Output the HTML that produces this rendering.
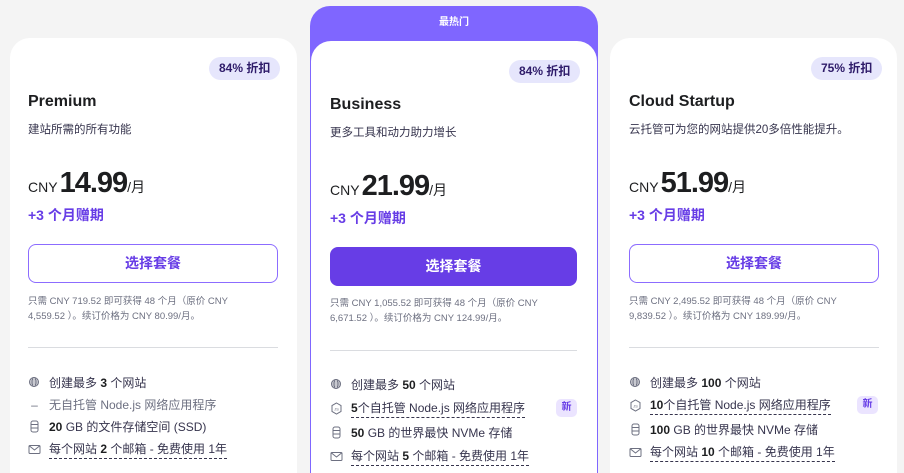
<!DOCTYPE html>
<html><head><meta charset="utf-8"><style>
*{margin:0;padding:0;box-sizing:border-box}
html,body{width:904px;height:473px;overflow:hidden}
body{background:#f4f4f4;font-family:"Liberation Sans","Noto Sans CJK SC",sans-serif;color:#1d1e20}
#w{position:relative;width:904px;height:473px;overflow:hidden}
.card{position:absolute;background:#fff;border-radius:20px 20px 0 0}
.a{position:absolute;white-space:nowrap}
.badge{background:#e6e6fc;border-radius:12px;font-size:12px;font-weight:bold;color:#2f1c6a;height:23px;line-height:23px;padding:0 10px}
.title{font-size:16px;font-weight:bold;color:#1d1e20}
.sub{font-size:11.5px;color:#36344d}
.cny{font-size:14px;color:#1d1e20;margin-right:2px}
.big{font-size:29px;font-weight:bold;letter-spacing:-1px}
.per{font-size:14px}
.bonus{font-size:14px;font-weight:bold;color:#673de6}
.btn{border:1px solid #8c6cff;border-radius:8px;height:39px;line-height:37px;text-align:center;font-size:14px;font-weight:bold;color:#673de6}
.btn.fill{background:#673de6;color:#fff;border-color:#673de6}
.fine{font-size:9.5px;color:#6d7081;line-height:15px;white-space:normal}
.hr{height:1px;background:#dadce0}
.f{font-size:12px;color:#36344d;display:flex;align-items:center}
.f b{color:#1d1e20}
.f svg{margin-right:8px;flex:none}
.u{border-bottom:1px dashed #36344d;padding-bottom:1px}
.new{background:#ebe4ff;color:#673de6;font-size:10px;font-weight:bold;border-radius:5px;width:21px;height:18px;line-height:18px;text-align:center}
</style></head><body><div id="w">

<svg width="0" height="0" style="position:absolute"><defs>
<g id="glb"><circle cx="6" cy="6" r="4.5" fill="none" stroke="#6d7081" stroke-width="1"/><ellipse cx="6" cy="6" rx="2" ry="4.5" fill="none" stroke="#6d7081"/><path d="M1.5 6h9M2 4h8M2 8h8" stroke="#6d7081" stroke-width=".8"/></g>
<g id="db"><rect x="3" y="1" width="7" height="11" rx="2" fill="none" stroke="#6d7081"/><path d="M3 4.5h7M3 8h7" stroke="#6d7081"/></g>
<g id="ml"><rect x="1" y="2.5" width="11" height="8" rx="1" fill="none" stroke="#6d7081"/><path d="M1.5 3l5 4 5-4" fill="none" stroke="#6d7081"/></g>
<g id="js"><path d="M6.5 1l4.5 2.6v5.8L6.5 12 2 9.4V3.6z" fill="none" stroke="#6d7081"/><text x="6.5" y="8.3" font-size="4" text-anchor="middle" fill="#6d7081" font-family="Liberation Sans">JS</text></g>
</defs></svg>

<div class="card" style="left:10px;top:38px;width:287px;height:435px"></div>
<div class="a badge" style="left:209px;top:57px">84% 折扣</div>
<div class="a title" style="left:28px;top:93px">Premium</div>
<div class="a sub" style="left:28px;top:121px">建站所需的所有功能</div>
<div class="a" style="left:28px;top:167px"><span class="cny">CNY</span><span class="big">14.99</span><span class="per">/月</span></div>
<div class="a bonus" style="left:28px;top:205px">+3 个月赠期</div>
<div class="a btn" style="left:28px;top:244px;width:250px">选择套餐</div>
<div class="a fine" style="left:28px;top:294px;width:220px">只需 CNY 719.52 即可获得 48 个月（原价 CNY 4,559.52 ）。续订价格为 CNY 80.99/月。</div>
<div class="a hr" style="left:28px;top:347px;width:250px"></div>
<div class="a f" style="left:28px;top:374px"><svg width="13" height="13"><use href="#glb"/></svg>创建最多 <b>&nbsp;3&nbsp;</b> 个网站</div>
<div class="a f" style="left:28px;top:396px;color:#6d7081"><span style="width:13px;margin-right:8px;text-align:center">–</span>无自托管 Node.js 网络应用程序</div>
<div class="a f" style="left:28px;top:418px"><svg width="13" height="13"><use href="#db"/></svg><b>20</b>&nbsp;GB 的文件存储空间 (SSD)</div>
<div class="a f" style="left:28px;top:440px"><svg width="13" height="13"><use href="#ml"/></svg><span class="u">每个网站 <b>2</b> 个邮箱 - 免费使用 1年</span></div>

<div class="card" style="left:310px;top:6px;width:288px;height:467px;background:#7f66ff"></div>
<div class="a" style="left:310px;top:13px;width:288px;text-align:center;color:#fff;font-size:10px;font-weight:bold">最热门</div>
<div class="card" style="left:311px;top:41px;width:286px;height:432px"></div>
<div class="a badge" style="left:509px;top:60px">84% 折扣</div>
<div class="a title" style="left:330px;top:96px">Business</div>
<div class="a sub" style="left:330px;top:124px">更多工具和动力助力增长</div>
<div class="a" style="left:330px;top:170px"><span class="cny">CNY</span><span class="big">21.99</span><span class="per">/月</span></div>
<div class="a bonus" style="left:330px;top:208px">+3 个月赠期</div>
<div class="a btn fill" style="left:330px;top:247px;width:247px">选择套餐</div>
<div class="a fine" style="left:330px;top:296px;width:220px">只需 CNY 1,055.52 即可获得 48 个月（原价 CNY 6,671.52 ）。续订价格为 CNY 124.99/月。</div>
<div class="a hr" style="left:330px;top:350px;width:247px"></div>
<div class="a f" style="left:330px;top:376px"><svg width="13" height="13"><use href="#glb"/></svg>创建最多 <b>&nbsp;50&nbsp;</b> 个网站</div>
<div class="a f" style="left:330px;top:399px"><svg width="13" height="13"><use href="#js"/></svg><span class="u"><b>5</b>个自托管 Node.js 网络应用程序</span></div>
<div class="a new" style="left:556px;top:399px">新</div>
<div class="a f" style="left:330px;top:424px"><svg width="13" height="13"><use href="#db"/></svg><b>50</b>&nbsp;GB 的世界最快 NVMe 存储</div>
<div class="a f" style="left:330px;top:447px"><svg width="13" height="13"><use href="#ml"/></svg><span class="u">每个网站 <b>5</b> 个邮箱 - 免费使用 1年</span></div>

<div class="card" style="left:610px;top:38px;width:287px;height:435px"></div>
<div class="a badge" style="left:811px;top:57px">75% 折扣</div>
<div class="a title" style="left:629px;top:93px">Cloud Startup</div>
<div class="a sub" style="left:629px;top:121px">云托管可为您的网站提供20多倍性能提升。</div>
<div class="a" style="left:629px;top:167px"><span class="cny">CNY</span><span class="big">51.99</span><span class="per">/月</span></div>
<div class="a bonus" style="left:629px;top:205px">+3 个月赠期</div>
<div class="a btn" style="left:629px;top:244px;width:250px">选择套餐</div>
<div class="a fine" style="left:629px;top:294px;width:225px">只需 CNY 2,495.52 即可获得 48 个月（原价 CNY 9,839.52 ）。续订价格为 CNY 189.99/月。</div>
<div class="a hr" style="left:629px;top:347px;width:250px"></div>
<div class="a f" style="left:629px;top:374px"><svg width="13" height="13"><use href="#glb"/></svg>创建最多 <b>&nbsp;100&nbsp;</b> 个网站</div>
<div class="a f" style="left:629px;top:396px"><svg width="13" height="13"><use href="#js"/></svg><span class="u"><b>10</b>个自托管 Node.js 网络应用程序</span></div>
<div class="a new" style="left:857px;top:396px">新</div>
<div class="a f" style="left:629px;top:421px"><svg width="13" height="13"><use href="#db"/></svg><b>100</b>&nbsp;GB 的世界最快 NVMe 存储</div>
<div class="a f" style="left:629px;top:443px"><svg width="13" height="13"><use href="#ml"/></svg><span class="u">每个网站 <b>10</b> 个邮箱 - 免费使用 1年</span></div>

</div></body></html>
